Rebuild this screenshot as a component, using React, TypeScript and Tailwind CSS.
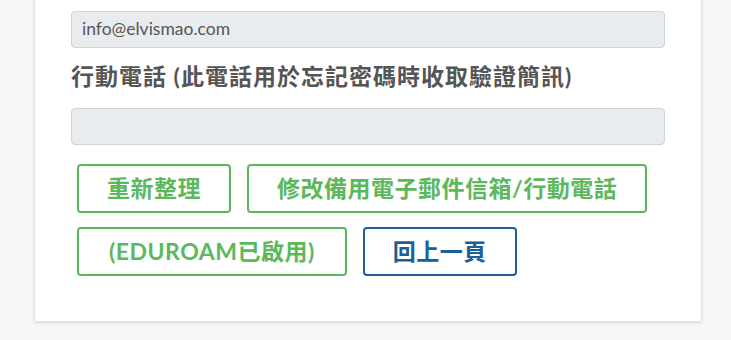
const font = { fontFamily: "Lato, 'Noto Sans CJK TC', sans-serif" };

const GreenButton = ({ label, wide = false }: { label: string; wide?: boolean }) => (
  <button
    className={
      wide
        ? "flex h-[49px] items-center justify-center rounded-[4px] border-2 border-[#5cb85c] bg-white px-[30px] text-[23px] font-bold tracking-[0.5px] text-[#5cb85c]"
        : "flex h-[49px] items-center justify-center rounded-[4px] border-2 border-[#5cb85c] bg-white px-[28px] text-[23px] font-bold tracking-[0.5px] text-[#5cb85c]"
    }
  >
    {label}
  </button>
);

export default function App() {
  return (
    <div className="min-h-[340px] bg-[#f6f7f9]" style={font}>
      <div className="ml-[34px] w-[668px] border-x border-b border-[#dfe2e6] bg-white px-[36px] pt-[11px] pb-[45px] shadow-[0_1px_2px_rgba(0,0,0,0.12)]">
        <div className="flex h-[37px] items-center rounded-[4px] border border-[#ced4da] bg-[#e9ecef] px-[10px] text-[17.5px] text-[#555]">
          info@elvismao.com
        </div>

        <div className="mt-[12px] mb-[16px] text-[23px] leading-[32px] font-bold tracking-[1px] text-[#555]">
          行動電話 (此電話用於忘記密碼時收取驗證簡訊)
        </div>

        <div className="h-[37px] rounded-[4px] border border-[#ced4da] bg-[#e9ecef]" />

        <div className="mt-[19px] ml-[6px] flex flex-wrap gap-x-[16px] gap-y-[14px]">
          <GreenButton label="重新整理" />
          <GreenButton label="修改備用電子郵件信箱/行動電話" />
          <GreenButton label="(EDUROAM已啟用)" wide />
          <button className="flex h-[49px] items-center justify-center rounded-[4px] border-2 border-[#1b5e98] bg-white px-[28px] text-[23px] font-bold tracking-[0.5px] text-[#1b5e98]">
            回上一頁
          </button>
        </div>
      </div>
    </div>
  );
}
